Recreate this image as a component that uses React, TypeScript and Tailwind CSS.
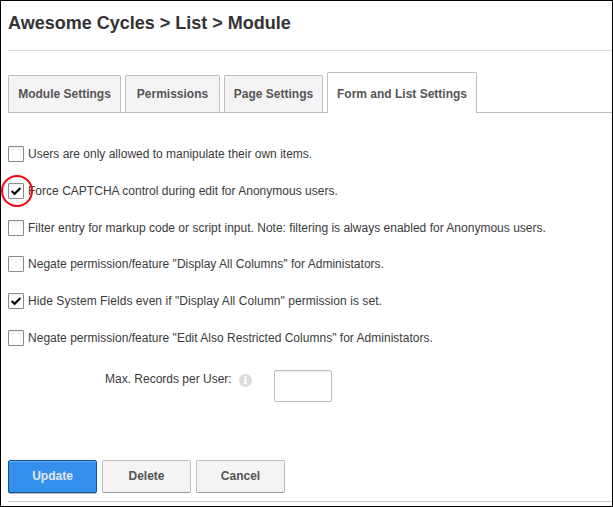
const tabs = [
  { label: 'Module Settings', box: 'w-[113px]' },
  { label: 'Permissions', box: 'w-[95px]' },
  { label: 'Page Settings', box: 'w-[99px]' },
  { label: 'Form and List Settings', box: 'w-[150px]', active: true },
];

const options = [
  { label: 'Users are only allowed to manipulate their own items.', row: 'h-[37px]' },
  { label: 'Force CAPTCHA control during edit for Anonymous users.', row: 'h-[37px] tracking-[0.02px]', checked: true, marked: true },
  { label: 'Filter entry for markup code or script input. Note: filtering is always enabled for Anonymous users.', row: 'h-9 tracking-[0.01px]' },
  { label: 'Negate permission/feature "Display All Columns" for Administators.', row: 'h-[37px] tracking-[0.02px]' },
  { label: 'Hide System Fields even if "Display All Column" permission is set.', row: 'h-[37px] tracking-[0.06px]', checked: true },
  { label: 'Negate permission/feature "Edit Also Restricted Columns" for Administators.', row: 'h-10 tracking-[0.02px]' },
];

function Checkbox({ checked }: { checked?: boolean }) {
  return (
    <span className="block size-4 shrink-0 rounded-[1px] border border-[#8a8a8a] bg-gradient-to-b from-[#f3f3f3] to-white to-40%">
      {checked && (
        <svg viewBox="0 0 14 14" className="size-[14px]">
          <path d="M2 7.6 L3.5 6.6 L5.5 8.6 L10.6 3.6 L12 4.7 L5.6 11.2 Z" fill="#000" stroke="#000" strokeWidth="0.3" />
        </svg>
      )}
    </span>
  );
}

export default function App() {
  return (
    <div className="flex h-[507px] w-[613px] flex-col overflow-hidden border border-black bg-white pl-[7px] font-['Liberation_Sans',Arial,sans-serif] text-[12px] text-[#3a3a3a]">
      <h1 className="h-[49px] shrink-0 pt-[10px] text-[18px] leading-6 font-bold whitespace-nowrap text-[#333]">
        Awesome Cycles &gt; List &gt; Module
      </h1>
      <div className="h-px shrink-0 bg-[#ddd]" />

      <div className="mt-[21px] flex h-[41px] shrink-0 items-end gap-1 border-b border-[#bebebe]">
        {tabs.map((tab) => (
          <div
            key={tab.label}
            className={`flex shrink-0 justify-center rounded-t-[2px] border border-b-0 border-[#bebebe] font-bold whitespace-nowrap text-[#555] ${tab.box} ${
              tab.active ? '-mb-px h-[41px] bg-white pt-[13px]' : 'h-[37px] bg-[#f4f4f4] pt-[10px]'
            }`}
          >
            <span className="leading-4">{tab.label}</span>
          </div>
        ))}
      </div>

      <div className="mt-[33px] shrink-0">
        {options.map((option) => (
          <div key={option.label} className={`relative flex items-start gap-1 ${option.row}`}>
            <Checkbox checked={option.checked} />
            <span className="leading-4 whitespace-nowrap">{option.label}</span>
            {option.marked && (
              <span className="absolute top-[-8px] -left-[7px] size-8 rounded-full border-2 border-[#f5000c]" />
            )}
          </div>
        ))}
      </div>

      <div className="flex h-[90px] shrink-0 items-start pl-[97px]">
        <span className="mt-[1px] w-[134px] leading-4 whitespace-nowrap">Max. Records per User:</span>
        <svg viewBox="0 0 13 13" className="mt-[4px] size-[13px]">
          <circle cx="6.5" cy="6.5" r="6.5" fill="#dcdcdc" />
          <path d="M5.4 2.2h2.2v1.7H5.4zM4.7 5h2.9v4h.8v1.3H4.6V9h.8V6.3h-.7z" fill="#fff" />
        </svg>
        <div className="ml-[22px] h-8 w-[58px] rounded-[2px] border border-[#bebebe] bg-white shadow-[inset_0_1px_1px_#eee]" />
      </div>

      <div className="flex shrink-0 gap-[5px] text-center leading-[31px] font-bold">
        <button className="h-[33px] w-[89px] rounded-[2px] border border-[#0e5499] bg-[#358fec] text-[#e3e8ee] shadow-[inset_0_1px_0_#69adf2,0_1px_0_#bbb]">
          Update
        </button>
        <button className="h-[33px] w-[89px] rounded-[2px] border border-[#bebebe] border-b-[#999] bg-[#f4f4f4] text-[#555]">
          Delete
        </button>
        <button className="h-[33px] w-[89px] rounded-[2px] border border-[#bebebe] border-b-[#999] bg-[#f4f4f4] text-[#555]">
          Cancel
        </button>
      </div>
      <div className="mt-2 h-px shrink-0 bg-[#c9c9c9]" />
    </div>
  );
}
